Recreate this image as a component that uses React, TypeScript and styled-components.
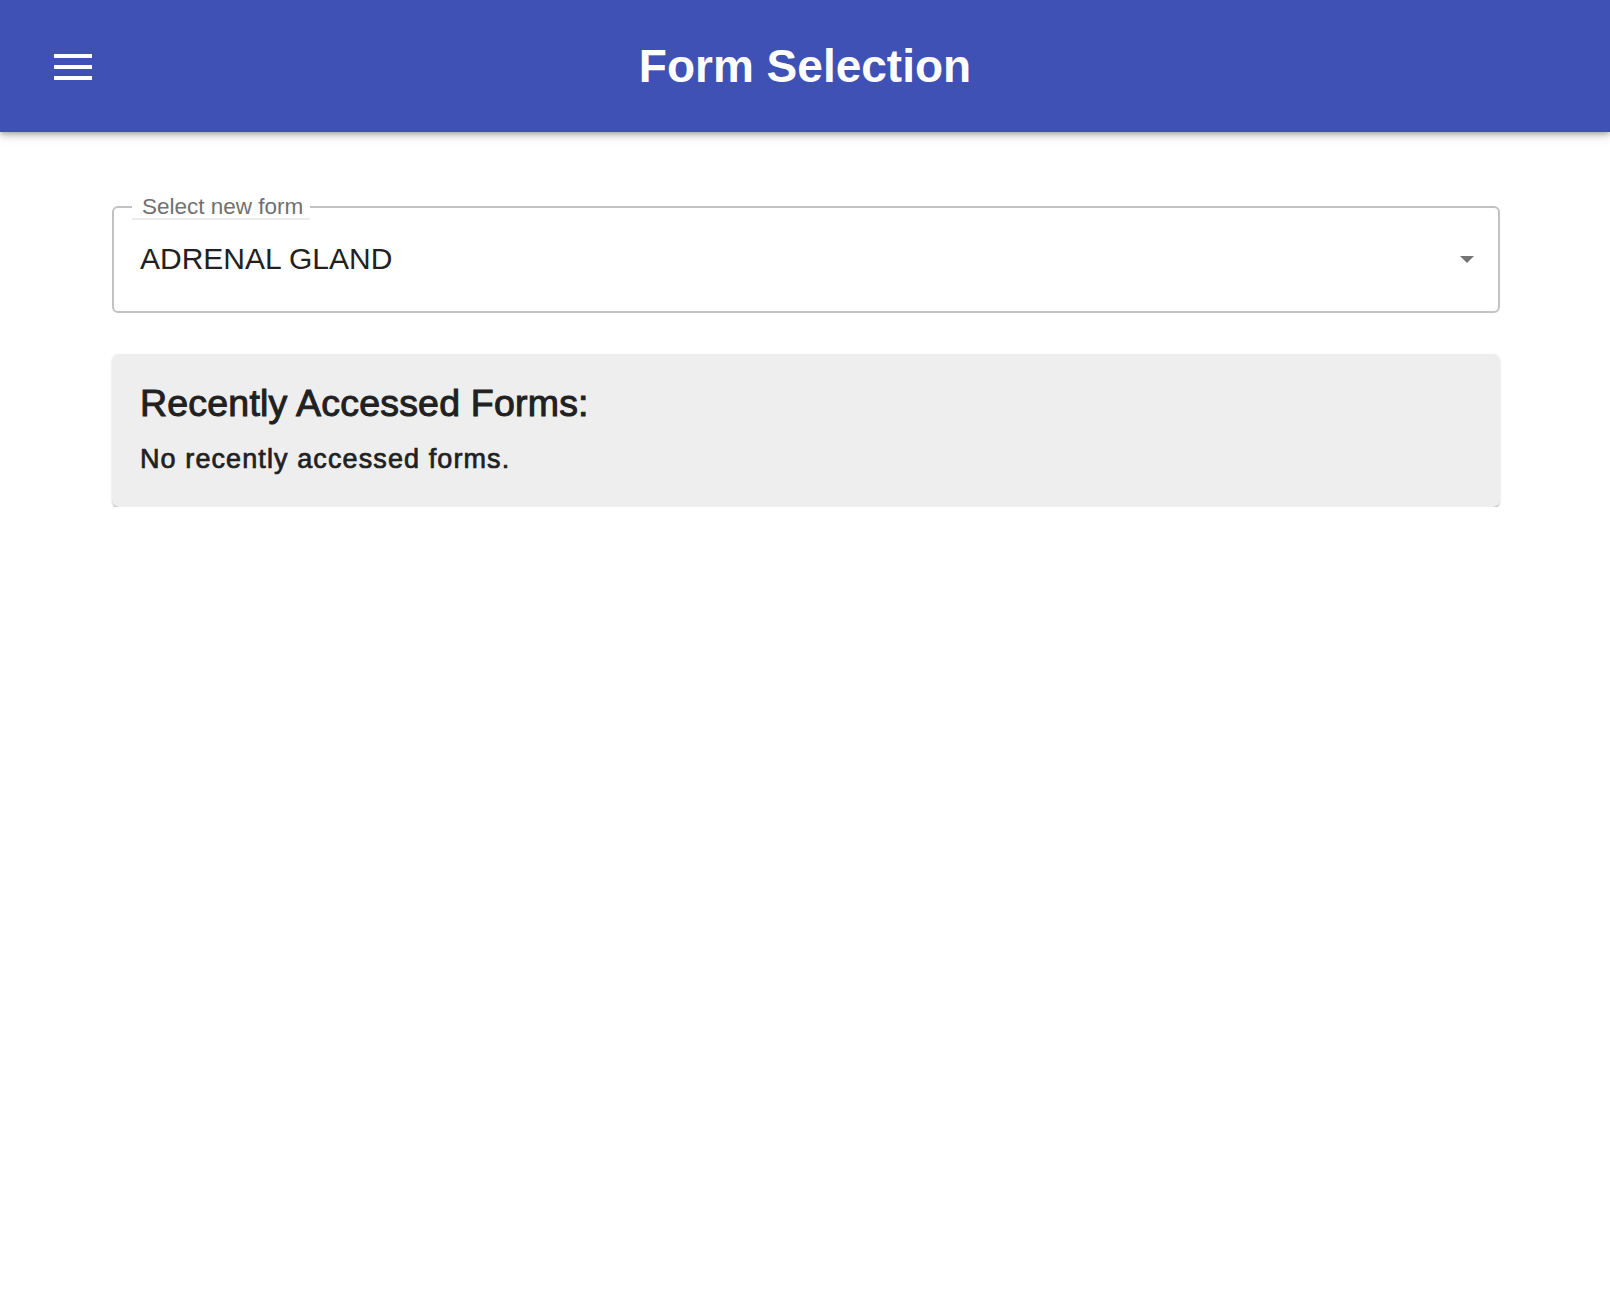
import styled, { createGlobalStyle } from 'styled-components';

const GlobalStyle = createGlobalStyle`
  body {
    margin: 0;
    background: #ffffff;
    font-family: 'Liberation Sans', Arial, sans-serif;
    color: #212121;
  }
`;

const AppBar = styled.header`
  position: relative;
  display: flex;
  align-items: center;
  justify-content: center;
  height: 132px;
  background: #3f51b5;
  box-shadow: 0 2px 4px -1px rgba(0, 0, 0, 0.2), 0 4px 6px 0 rgba(0, 0, 0, 0.14),
    0 2px 14px 0 rgba(0, 0, 0, 0.12);
`;

const MenuButton = styled.button`
  position: absolute;
  left: 54px;
  top: 54px;
  display: flex;
  padding: 0;
  border: none;
  background: none;
  cursor: pointer;
`;

const Title = styled.h1`
  margin: 0;
  font-size: 46px;
  font-weight: 700;
  color: #ffffff;
`;

const Main = styled.main`
  display: flex;
  flex-direction: column;
  gap: 41px;
  padding: 62px 110px 0 112px;
`;

const Field = styled.fieldset`
  margin: 0;
  padding: 0 24px 0 18px;
  border: 2px solid #c2c2c2;
  border-radius: 6px;
`;

const Legend = styled.legend`
  padding: 0 7px 0 10px;
  font-size: 22.5px;
  line-height: 26px;
  color: #707070;
  box-shadow: inset 0 -2px 0 #ececec;
`;

const SelectRow = styled.div`
  box-sizing: border-box;
  display: flex;
  align-items: center;
  justify-content: space-between;
  height: 91px;
  padding: 0 0 13px 8px;
  cursor: pointer;
`;

const SelectValue = styled.span`
  font-size: 30px;
  color: #212121;
`;

const Card = styled.section`
  padding: 28px 28px 33px 28px;
  background: #eeeeee;
  border-radius: 7px;
  box-shadow: 0 2px 2px -1px rgba(0, 0, 0, 0.35), 0 1px 3px 0 rgba(0, 0, 0, 0.1);
`;

const CardTitle = styled.h2`
  margin: 0 0 19px;
  font-size: 37.5px;
  line-height: 43px;
  font-weight: 400;
  letter-spacing: 0.2px;
  -webkit-text-stroke: 1px #212121;
  color: #212121;
`;

const CardText = styled.p`
  margin: 0;
  font-size: 27px;
  line-height: 30px;
  font-weight: 400;
  letter-spacing: 1.1px;
  -webkit-text-stroke: 0.7px #212121;
  color: #212121;
`;

export default function App() {
  return (
    <>
      <GlobalStyle />
      <AppBar>
        <MenuButton aria-label="menu">
          <svg width="38" height="26" viewBox="0 0 38 26">
            <rect x="0" y="0" width="38" height="4" fill="#fff" />
            <rect x="0" y="11" width="38" height="4" fill="#fff" />
            <rect x="0" y="22" width="38" height="4" fill="#fff" />
          </svg>
        </MenuButton>
        <Title>Form Selection</Title>
      </AppBar>
      <Main>
        <Field>
          <Legend>Select new form</Legend>
          <SelectRow>
            <SelectValue>ADRENAL GLAND</SelectValue>
            <svg width="14" height="7" viewBox="0 0 14 7">
              <path d="M0 0 L14 0 L7 7 Z" fill="#757575" />
            </svg>
          </SelectRow>
        </Field>
        <Card>
          <CardTitle>Recently Accessed Forms:</CardTitle>
          <CardText>No recently accessed forms.</CardText>
        </Card>
      </Main>
    </>
  );
}
